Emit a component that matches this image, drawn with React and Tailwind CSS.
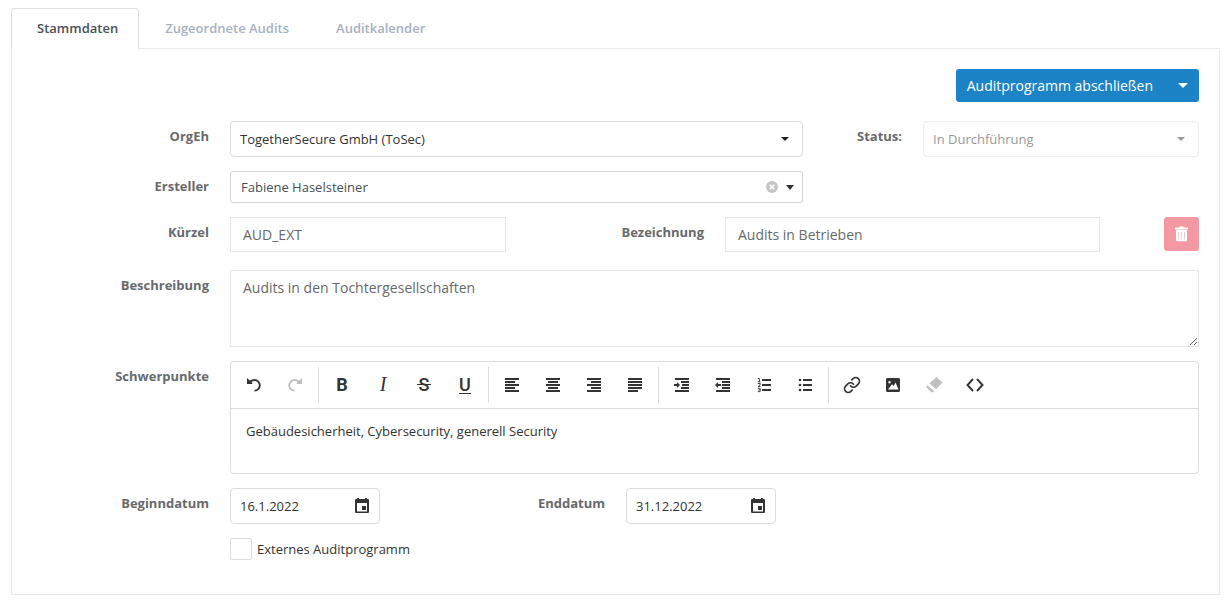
import React, { useState } from "react";
import { Link as LinkIcon } from "lucide-react";

function Icon({ children, className = "" }) {
  return (
    <svg viewBox="0 0 16 16" fill="currentColor" aria-hidden="true" className={`h-4 w-4 shrink-0 ${className}`}>
      {children}
    </svg>
  );
}

function Caret({ className = "h-1 w-2" }) {
  return (
    <svg viewBox="0 0 8 4" preserveAspectRatio="none" fill="currentColor" aria-hidden="true" className={className}>
      <path d="M0 0H8L4 4Z" />
    </svg>
  );
}

function Bars({ rows }) {
  return (
    <Icon>
      {rows.map(([x, w], i) => (
        <rect key={i} x={x} y={1 + i * 3} width={w} height="2" />
      ))}
    </Icon>
  );
}

function Letter({ char, className, children }) {
  return (
    <svg viewBox="0 0 24 24" fill="currentColor" aria-hidden="true" className="-mx-1 h-6 w-6 shrink-0">
      <text x="12" y="18" textAnchor="middle" className={className}>
        {char}
      </text>
      {children}
    </svg>
  );
}

const UNDO = (
  <>
    <path d="M1 1L2.6 2.6L6.6 6L6 7H1Z" />
    <path d="M3.4 5.2C4.800 3.600 6.700 3 8.500 3A5.300 5.300 0 0 1 8.500 13.600" fill="none" stroke="currentColor" strokeWidth="1.900" />
  </>
);

const toolGroups = [
  [
    { label: "Rückgängig", icon: <Icon>{UNDO}</Icon> },
    { label: "Wiederholen", disabled: true, icon: <Icon className="-scale-x-100">{UNDO}</Icon> },
  ],
  [
    { label: "Fett", icon: <Letter char="B" className="font-[Roboto,sans-serif] text-[18px] font-bold" /> },
    { label: "Kursiv", icon: <Letter char="I" className="font-['Liberation_Serif',serif] text-[20px] italic" /> },
    {
      label: "Durchgestrichen",
      icon: (
        <Letter char="S" className="font-[Roboto,sans-serif] text-[18px] font-medium">
          <rect x="5" y="11" width="14" height="1" />
        </Letter>
      ),
    },
    {
      label: "Unterstrichen",
      icon: (
        <Letter char="U" className="font-[Roboto,sans-serif] text-[18px] font-medium">
          <rect x="6" y="20" width="12" height="1" />
        </Letter>
      ),
    },
  ],
  [
    { label: "Linksbündig", icon: <Bars rows={[[1, 14], [1, 10], [1, 14], [1, 10], [1, 14]]} /> },
    { label: "Zentriert", icon: <Bars rows={[[1, 14], [3, 10], [1, 14], [3, 10], [1, 14]]} /> },
    { label: "Rechtsbündig", icon: <Bars rows={[[1, 14], [5, 10], [1, 14], [5, 10], [1, 14]]} /> },
    { label: "Blocksatz", icon: <Bars rows={[[1, 14], [1, 14], [1, 14], [1, 14], [1, 10]]} /> },
  ],
  [
    {
      label: "Einzug vergrößern",
      icon: (
        <Icon>
          <path d="M1 1H15V3H1ZM7 4H15V6H7ZM8 7H15V9H8ZM7 10H15V12H7ZM1 13H15V15H1ZM0 7H3V5L6 8L3 11V9H0Z" />
        </Icon>
      ),
    },
    {
      label: "Einzug verkleinern",
      icon: (
        <Icon>
          <path d="M1 1H15V3H1ZM7 4H15V6H7ZM7 7H15V9H7ZM7 10H15V12H7ZM1 13H15V15H1ZM6 7H3V5L0 8L3 11V9H6Z" />
        </Icon>
      ),
    },
    {
      label: "Nummerierte Liste",
      icon: (
        <Icon>
          <path d="M6 2H15V4H6ZM6 7H15V9H6ZM6 12H15V14H6Z" />
          <path
            d="M1.8 1.5H3.4V4.8M1.8 4.8H4.6M1.8 6.5H4.2V7.8L2.2 9.5H4.6M1.8 11.3H4.2V14.6H1.8M2.4 12.9H4.2"
            fill="none"
            stroke="currentColor"
            strokeWidth="0.9"
          />
        </Icon>
      ),
    },
    {
      label: "Aufzählung",
      icon: (
        <Icon>
          <path d="M6 2H15V4H6ZM6 7H15V9H6ZM6 12H15V14H6Z" />
          <circle cx="3" cy="3" r="1.3" />
          <circle cx="3" cy="8" r="1.3" />
          <circle cx="3" cy="13" r="1.3" />
        </Icon>
      ),
    },
  ],
  [
    { label: "Link einfügen", icon: <LinkIcon className="-mx-px h-[18px] w-[18px] shrink-0" strokeWidth={2.2} aria-hidden="true" /> },
    {
      label: "Bild einfügen",
      icon: (
        <Icon>
          <path
            fillRule="evenodd"
            d="M2.5 1H13.5A1.5 1.5 0 0 1 15 2.5V13.5A1.5 1.5 0 0 1 13.5 15H2.5A1.5 1.5 0 0 1 1 13.5V2.5A1.5 1.5 0 0 1 2.5 1ZM3 12.5H13.5L10.5 5.5L8.8 9L7 7.3ZM4.5 4A1.2 1.2 0 1 0 4.5 6.4A1.2 1.2 0 1 0 4.5 4Z"
          />
        </Icon>
      ),
    },
    {
      label: "Formatierung löschen",
      disabled: true,
      icon: (
        <Icon className="overflow-visible">
          <path d="M10.5 0L16.5 5.5L10 12.3L3.6 6.3ZM1.6 8.2L8.3 14.4L7.4 15.2H5.4L0 10Z" />
        </Icon>
      ),
    },
    {
      label: "Quelltext anzeigen",
      icon: (
        <Icon className="overflow-visible">
          <path d="M6 2L0.5 8L6 14M10 2L15.5 8L10 14" fill="none" stroke="currentColor" strokeWidth="1.9" />
        </Icon>
      ),
    },
  ],
];

function Label({ htmlFor, id, children, className = "" }) {
  return (
    <label htmlFor={htmlFor} id={id} className={`pt-[5px] text-right font-bold leading-5 text-[#676a6c] ${className}`}>
      {children}
    </label>
  );
}

function DateField({ id, value }) {
  const [date, setDate] = useState(value);
  return (
    <div className="flex h-9 w-[150px] items-center rounded border border-[#dcdcdc] bg-white text-[#333]">
      <input
        id={id}
        value={date}
        onChange={(e) => setDate(e.target.value)}
        className="h-full w-full min-w-0 bg-transparent pl-[9px] outline-none"
      />
      <button type="button" aria-label="Kalender öffnen" className="flex h-full items-center pl-2 pr-[9px]">
        <Icon>
          <path
            fillRule="evenodd"
            d="M3 0H5V1H11V0H13V1H14A1 1 0 0 1 15 2V14A1 1 0 0 1 14 15H2A1 1 0 0 1 1 14V2A1 1 0 0 1 2 1H3ZM3 5V13.5H13V5ZM8 8H12V12H8Z"
          />
        </Icon>
      </button>
    </div>
  );
}

export default function App() {
  const [tab, setTab] = useState("Stammdaten");
  const tabs = ["Stammdaten", "Zugeordnete Audits", "Auditkalender"];
  return (
    <main className="bg-white px-[11px] py-2 font-['Open_Sans',sans-serif] text-[13px] text-[#676a6c]">
      <div role="tablist" className="flex h-10">
        {tabs.map((name) => (
          <button
            key={name}
            type="button"
            role="tab"
            aria-selected={tab === name}
            onClick={() => setTab(name)}
            className={
              tab === name
                ? "z-10 -mb-px rounded-t border border-b-0 border-[#dddfe2] bg-white pl-[25px] pr-5 font-semibold text-[#495057]"
                : "-mb-px border border-transparent pl-[25px] pr-5 font-semibold text-[#a7b1c2]"
            }
          >
            {name}
          </button>
        ))}
      </div>

      <form onSubmit={(e) => e.preventDefault()} className="border border-[#e7eaec] px-5 pb-[34px] pt-5">
        <div className="mb-[19px] flex justify-end">
          <div className="flex h-[33px] overflow-hidden rounded-[3px] bg-[#1c84c6] text-[14px] font-medium text-white">
            <button type="button" className="pl-[11px] pr-[13px]">
              Auditprogramm abschließen
            </button>
            <button type="button" aria-label="Weitere Aktionen" className="flex items-center pl-3 pr-[11px]">
              <Caret className="h-[5px] w-[10px]" />
            </button>
          </div>
        </div>

        <div className="grid grid-cols-12 gap-x-[21px] gap-y-[14px]">
          <Label htmlFor="orgeh" className="col-span-2">
            OrgEh
          </Label>
          <div className="relative col-span-6">
            <select
              id="orgeh"
              className="h-9 w-full appearance-none rounded border border-[#dcdcdc] bg-white pl-[9px] pr-8 pt-[2px] text-[#333]"
            >
              <option>TogetherSecure GmbH (ToSec)</option>
            </select>
            <Caret className="pointer-events-none absolute right-[14px] top-4 h-1 w-2 text-[#222]" />
          </div>
          <Label htmlFor="status">Status:</Label>
          <div className="relative col-span-3">
            <select
              id="status"
              disabled
              className="h-9 w-full appearance-none rounded border border-[#ededed] bg-white pl-[9px] pr-8 pt-[2px] text-[#999] opacity-100"
            >
              <option>In Durchführung</option>
            </select>
            <Caret className="pointer-events-none absolute right-[14px] top-4 h-1 w-2 text-[#999]" />
          </div>

          <Label htmlFor="ersteller" className="col-span-2">
            Ersteller
          </Label>
          <div className="relative col-span-6">
            <select
              id="ersteller"
              className="h-8 w-full appearance-none rounded-[3px] border border-[#ced4da] bg-white pl-[10px] pr-12 pt-[2px] text-[#495057]"
            >
              <option>Fabiene Haselsteiner</option>
            </select>
            <button type="button" aria-label="Auswahl löschen" className="absolute right-[25px] top-[10px] text-[#c5c5c5]">
              <svg viewBox="0 0 12 12" aria-hidden="true" className="h-3 w-3">
                <circle cx="6" cy="6" r="6" fill="currentColor" />
                <path d="M3.7 3.7L8.3 8.3M8.3 3.7L3.7 8.3" stroke="#fff" strokeWidth="1.5" />
              </svg>
            </button>
            <Caret className="pointer-events-none absolute right-[9px] top-[14px] h-[5px] w-2 text-[#333]" />
          </div>

          <Label htmlFor="kuerzel" className="col-span-2 col-start-1">
            Kürzel
          </Label>
          <input
            id="kuerzel"
            defaultValue="AUD_EXT"
            className="col-span-3 h-[35px] w-full border border-[#e5e6e7] bg-white px-3 text-[14px] text-[#676a6c]"
          />
          <Label htmlFor="bezeichnung" className="col-span-2">
            Bezeichnung
          </Label>
          <input
            id="bezeichnung"
            defaultValue="Audits in Betrieben"
            className="col-span-4 h-[35px] w-full border border-[#e5e6e7] bg-white px-3 text-[14px] text-[#676a6c]"
          />
          <button
            type="button"
            aria-label="Löschen"
            className="flex h-[34px] w-[35px] items-center justify-center justify-self-end rounded-[3px] bg-[#f499a3] text-white"
          >
            <Icon>
              <path
                fillRule="evenodd"
                d="M5.5 0.5H9.5V1.5H13.5A0.5 0.5 0 0 1 14 2V3.5H1V2A0.5 0.5 0 0 1 1.5 1.5H5.5ZM2 4H13V14A1.3 1.3 0 0 1 11.7 15.3H3.3A1.3 1.3 0 0 1 2 14ZM4.5 6V13.500H5V6ZM7.200 6V13.500H7.700V6ZM10 6V13.500H10.500V6Z"
              />
            </Icon>
          </button>

          <Label htmlFor="beschreibung" className="col-span-2 mt-1">
            Beschreibung
          </Label>
          <textarea
            id="beschreibung"
            defaultValue="Audits in den Tochtergesellschaften"
            className="col-span-10 mt-1 block h-[77px] w-full resize border border-[#e5e6e7] bg-white px-3 py-[6px] text-[14px] leading-[21px] text-[#676a6c]"
          />

          <Label id="schwerpunkte-label" className="col-span-2">
            Schwerpunkte
          </Label>
          <div className="col-span-10 rounded border border-[#dcdcdc] text-[#333]">
            <div role="toolbar" aria-label="Textformatierung" className="flex flex-wrap border-b border-[#dcdcdc] py-[5px] pl-[3px]">
              {toolGroups.map((group, i) => (
                <div key={i} className={i ? "ml-[2px] flex border-l border-[#dcdcdc] pl-[3px]" : "flex"}>
                  {group.map((tool) => (
                    <button
                      key={tool.label}
                      type="button"
                      aria-label={tool.label}
                      disabled={tool.disabled}
                      className="flex h-9 w-[41px] items-center pl-3 disabled:text-[#c0c0c0]"
                    >
                      {tool.icon}
                    </button>
                  ))}
                </div>
              ))}
            </div>
            <div
              role="textbox"
              aria-multiline="true"
              aria-labelledby="schwerpunkte-label"
              contentEditable
              suppressContentEditableWarning
              className="h-[64px] px-[15px] pt-3 leading-5 outline-none"
            >
              Gebäudesicherheit, Cybersecurity, generell Security
            </div>
          </div>

          <Label htmlFor="beginn" className="col-span-2">
            Beginndatum
          </Label>
          <div className="col-span-2">
            <DateField id="beginn" value="16.1.2022" />
          </div>
          <Label htmlFor="ende" className="col-span-2">
            Enddatum
          </Label>
          <div className="col-span-6">
            <DateField id="ende" value="31.12.2022" />
          </div>

          <div className="col-span-10 col-start-3 flex items-center">
            <input
              id="extern"
              type="checkbox"
              className="h-[22px] w-[22px] appearance-none rounded-[2px] border border-[#dcdcdc] bg-white checked:bg-[#1c84c6]"
            />
            <label htmlFor="extern" className="pl-[5px] leading-5 text-[#333]">
              Externes Auditprogramm
            </label>
          </div>
        </div>
      </form>
    </main>
  );
}
